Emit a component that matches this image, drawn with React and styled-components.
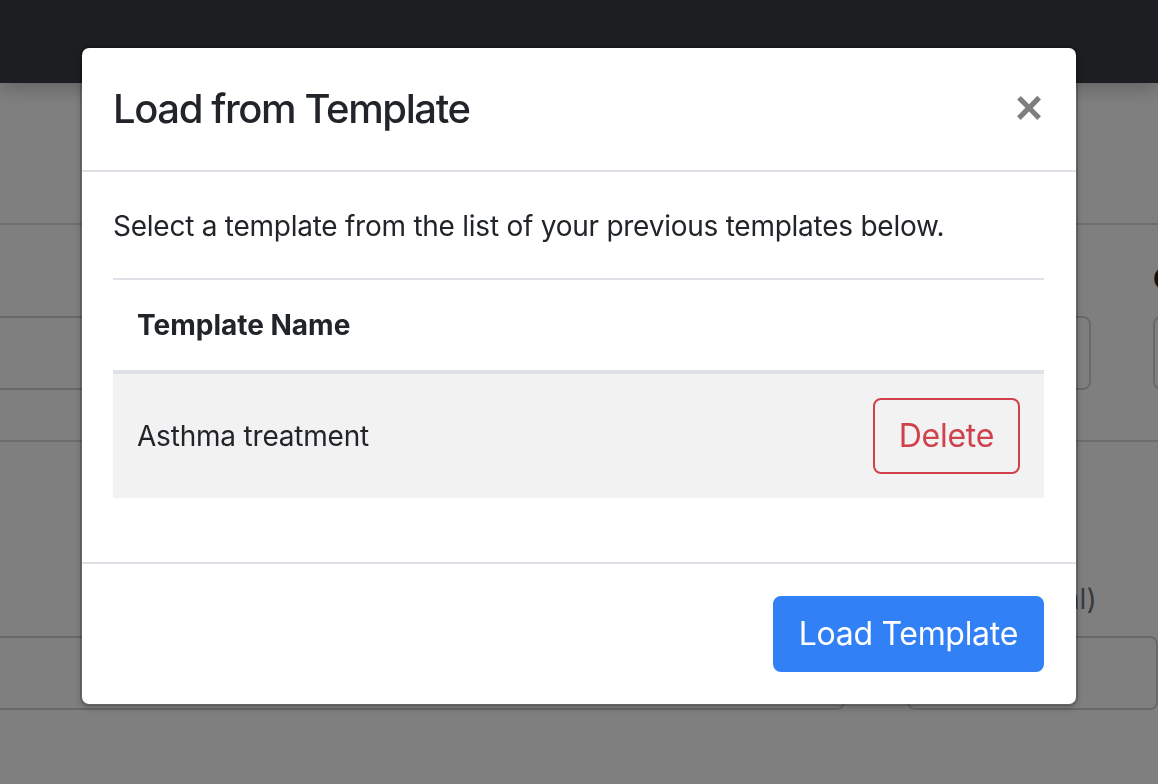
import React from "react";
import styled, { createGlobalStyle } from "styled-components";

const GlobalStyle = createGlobalStyle`
  html, body {
    margin: 0;
    padding: 0;
  }
  body {
    font-family: Inter, "Noto Sans", "Liberation Sans", sans-serif;
    color: #212529;
    background: #fff;
    overflow: hidden;
  }
  * {
    box-sizing: border-box;
  }
`;

// page behind the backdrop
const Page = styled.div`
  height: 784px;
  background: #fff;
  overflow: hidden;
`;

const Navbar = styled.header`
  height: 83px;
  background: #3a3c44;
  box-shadow: 0 6px 18px rgba(0, 0, 0, 0.22);
  position: relative;
  z-index: 1;
`;

const TopBand = styled.div`
  height: 142px;
  border-bottom: 2px solid #dadada;
`;

const FormSection = styled.section`
  padding: ${(props) => props.$pad};
  border-bottom: ${(props) => (props.$line ? "2px solid #dadada" : "none")};
`;

const FieldGrid = styled.div`
  display: grid;
  grid-template-columns: ${(props) => props.$cols};
  column-gap: 62px;
  margin-left: -40px;
  align-items: end;
`;

const Field = styled.div`
  display: flex;
  flex-direction: column;
`;

const FieldLabel = styled.label`
  font-size: 28px;
  line-height: 42px;
  margin-bottom: 16px;
  white-space: nowrap;
  font-weight: ${(props) => (props.$bold ? 700 : 400)};
  color: ${(props) => (props.$muted ? "#6c757d" : "#212529")};
  letter-spacing: ${(props) => (props.$muted ? "0.2px" : "0")};
`;

const Input = styled.div`
  height: 74px;
  border: 2px solid #ced4da;
  border-radius: 8px;
  background: #fff;
`;

// modal
const Backdrop = styled.div`
  position: fixed;
  inset: 0;
  background: rgba(0, 0, 0, 0.5);
  z-index: 10;
`;

const ModalWrap = styled.div`
  position: fixed;
  inset: 0;
  z-index: 20;
`;

const Dialog = styled.div`
  width: 998px;
  margin: 46px auto 0;
`;

const Content = styled.div`
  display: flex;
  flex-direction: column;
  background: #fff;
  background-clip: padding-box;
  border: 2px solid rgba(0, 0, 0, 0.2);
  border-radius: 9px;
  box-shadow: 0 3px 6px rgba(0, 0, 0, 0.18);
`;

const Header = styled.div`
  display: flex;
  align-items: flex-start;
  justify-content: space-between;
  padding: 32px 32px 32px 31px;
  border-bottom: 2px solid #dee2e6;
`;

const Title = styled.h5`
  margin: 0;
  font-size: 40px;
  line-height: 58px;
  font-weight: 500;
  letter-spacing: -1.4px;
  color: #212529;
`;

const CloseButton = styled.button`
  padding: 32px;
  margin: -32px -32px -32px auto;
  background: transparent;
  border: 0;
  font-family: "Liberation Sans", Arial, sans-serif;
  font-size: 48px;
  font-weight: 700;
  line-height: 1;
  color: #000;
  opacity: 0.5;
  text-shadow: 0 2px 0 #fff;
  cursor: pointer;
  transform: translate(-1px, 4px);
`;

const Body = styled.div`
  padding: 32px 32px 32px 31px;
`;

const Lead = styled.p`
  margin: 0 0 32px;
  font-size: 28px;
  line-height: 42px;
  letter-spacing: -0.25px;
  transform: translateY(1px);
`;

const Table = styled.table`
  width: 100%;
  margin-bottom: 32px;
  border-collapse: collapse;
  font-size: 28px;
  line-height: 42px;
`;

const Th = styled.th`
  padding: 24px;
  text-align: left;
  font-weight: 700;
  vertical-align: bottom;
  border-top: 2px solid #dee2e6;
  border-bottom: 4px solid #dee2e6;
`;

const Row = styled.tr`
  background: ${(props) => (props.$striped ? "#f2f2f2" : "transparent")};
`;

const Td = styled.td`
  padding: 24px;
  vertical-align: middle;
  text-align: ${(props) => props.$align || "left"};
  letter-spacing: -0.2px;
`;

const Button = styled.button`
  font-family: Inter, "Noto Sans", sans-serif;
  font-size: 32px;
  line-height: 48px;
  font-weight: 400;
  padding: 12px 24px;
  border-radius: 8px;
  border: 2px solid ${(props) => props.$color};
  background: ${(props) => (props.$outline ? "transparent" : props.$color)};
  color: ${(props) => (props.$outline ? props.$color : "#fff")};
  letter-spacing: -0.3px;
  cursor: pointer;
`;

const Footer = styled.div`
  display: flex;
  justify-content: flex-end;
  align-items: center;
  padding: 24px;
  border-top: 2px solid #dee2e6;

  & > * {
    margin: 8px;
  }
`;

const templates = [{ id: 1, name: "Asthma treatment" }];

function App() {
  return (
    <>
      <GlobalStyle />
      <Page>
        <Navbar />
        <TopBand />
        <FormSection $pad="33px 0 50px" $line>
          <FieldGrid $cols="1131px 1fr">
            <Field>
              <Input />
            </Field>
            <Field>
              <FieldLabel $bold>Category</FieldLabel>
              <Input />
            </Field>
          </FieldGrid>
        </FormSection>
        <FormSection $pad="136px 0 0">
          <FieldGrid $cols="885px 1fr">
            <Field>
              <Input />
            </Field>
            <Field>
              <FieldLabel $muted>Unit (optional)</FieldLabel>
              <Input />
            </Field>
          </FieldGrid>
        </FormSection>
      </Page>

      <Backdrop />
      <ModalWrap>
        <Dialog>
          <Content>
            <Header>
              <Title>Load from Template</Title>
              <CloseButton aria-label="Close">×</CloseButton>
            </Header>
            <Body>
              <Lead>
                Select a template from the list of your previous templates
                below.
              </Lead>
              <Table>
                <thead>
                  <tr>
                    <Th>Template Name</Th>
                    <Th />
                  </tr>
                </thead>
                <tbody>
                  {templates.map((t, i) => (
                    <Row key={t.id} $striped={i % 2 === 0}>
                      <Td>{t.name}</Td>
                      <Td $align="right">
                        <Button $outline $color="#cf424d">
                          Delete
                        </Button>
                      </Td>
                    </Row>
                  ))}
                </tbody>
              </Table>
            </Body>
            <Footer>
              <Button $color="#3280f6">Load Template</Button>
            </Footer>
          </Content>
        </Dialog>
      </ModalWrap>
    </>
  );
}

export default App;
